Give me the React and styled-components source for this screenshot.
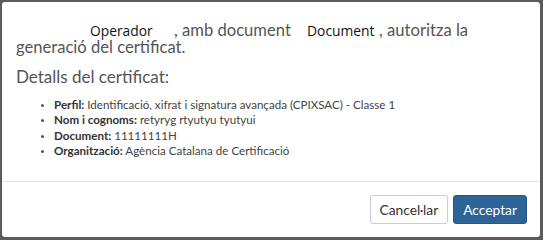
import React from "react";
import styled, { createGlobalStyle } from "styled-components";

const Global = createGlobalStyle`
  html, body { margin: 0; padding: 0; }
  body {
    background: #5b5b5b;
    font-family: Lato, "Noto Sans", sans-serif;
    width: 543px;
    height: 240px;
    overflow: hidden;
  }
`;

const Backdrop = styled.div`
  box-sizing: border-box;
  width: 543px;
  height: 240px;
  padding: 2px 3px 3px 2px;
  display: flex;
`;

const Dialog = styled.div`
  flex: 1;
  background: #fff;
  border-radius: 3px;
  display: flex;
  flex-direction: column;
  overflow: hidden;
`;

const Body = styled.div`
  flex: 1;
  padding: 20px 15px 0 14px;
  color: #555;
`;

const Intro = styled.p`
  margin: 0;
  font-size: 16.6px;
  line-height: 17px;
`;

const Field = styled.span`
  display: inline-block;
  box-sizing: border-box;
  width: ${(p) => p.$w}px;
  padding-left: ${(p) => p.$pad}px;
  font-family: "Open Sans", sans-serif;
  font-size: 13.8px;
  line-height: 14px;
  color: #111;
`;

const Heading = styled.h4`
  margin: 11px 0 0 0;
  font-size: 17px;
  font-weight: 400;
  line-height: 20px;
  color: #555;
`;

const List = styled.ul`
  margin: 10px 0 0 0;
  padding-left: 38px;
  font-size: 11.6px;
  line-height: 15.3px;
  color: #444;
  list-style: disc;
  & li::marker { font-size: 9px; color: #555; }
`;

const Label = styled.strong`
  font-weight: 700;
  color: #333;
`;

const Footer = styled.div`
  border-top: 1px solid #e5e5e5;
  padding: 13px 13px 13px 0;
  display: flex;
  justify-content: flex-end;
  gap: 5px;
`;

const Button = styled.button`
  box-sizing: border-box;
  height: 29px;
  padding: 0 9px;
  border-radius: 3px;
  font-family: Lato, sans-serif;
  font-size: 13.8px;
  border: 1px solid ${(p) => (p.$primary ? "#245a8a" : "#ccc")};
  background: ${(p) => (p.$primary ? "#2c6497" : "#fff")};
  color: ${(p) => (p.$primary ? "#fff" : "#333")};
`;

const items = [
  ["Perfil:", "Identificació, xifrat i signatura avançada (CPIXSAC) - Classe 1"],
  ["Nom i cognoms:", "retyryg rtyutyu tyutyui"],
  ["Document:", "11111111H"],
  ["Organització:", "Agència Catalana de Certificació"],
];

export default function App() {
  return (
    <>
      <Global />
      <Backdrop>
        <Dialog>
          <Body>
            <Intro>
              <Field $w={158} $pad={74}>Operador</Field>, amb document{" "}
              <Field $w={84} $pad={12}>Document</Field>, autoritza la
              <br />
              generació del certificat.
            </Intro>
            <Heading>Detalls del certificat:</Heading>
            <List>
              {items.map(([k, v]) => (
                <li key={k}>
                  <Label>{k}</Label> {v}
                </li>
              ))}
            </List>
          </Body>
          <Footer>
            <Button>Cancel·lar</Button>
            <Button $primary>Acceptar</Button>
          </Footer>
        </Dialog>
      </Backdrop>
    </>
  );
}
